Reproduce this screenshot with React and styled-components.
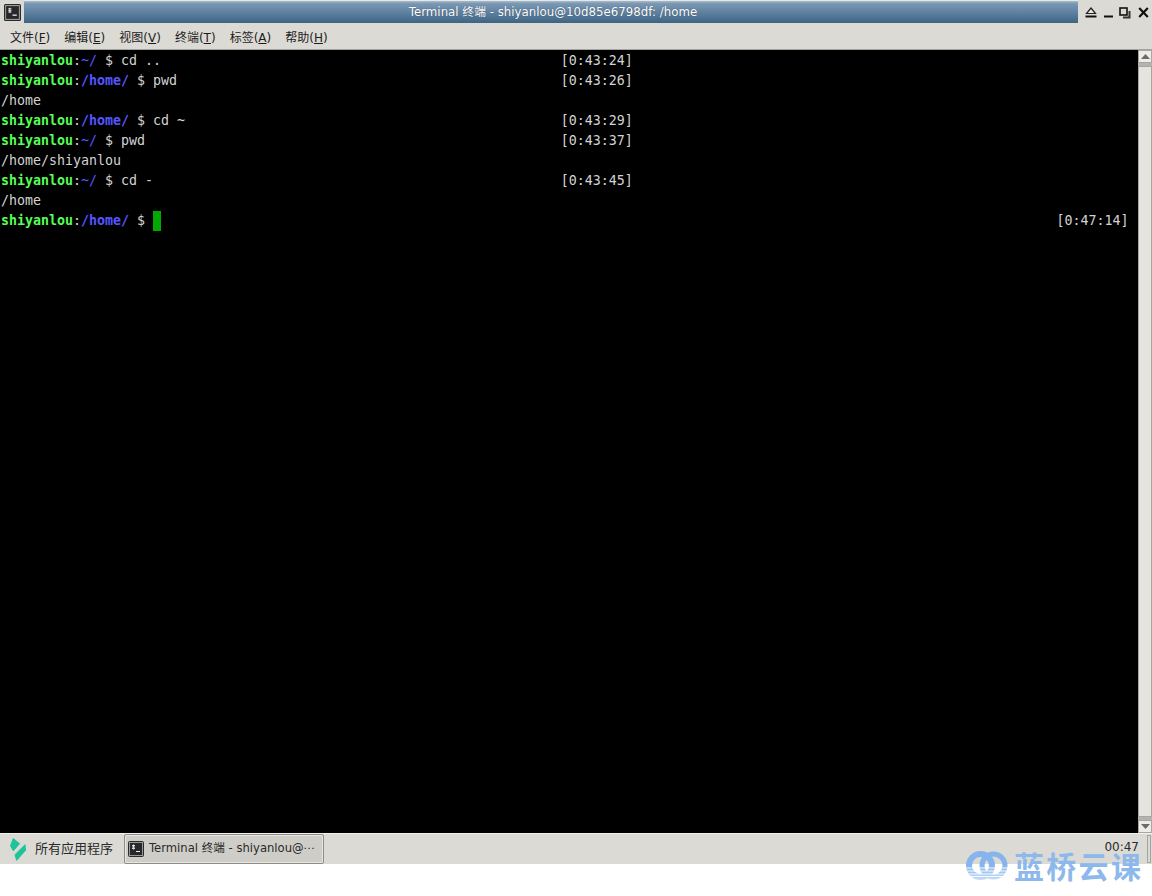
import React from "react";
import styled, { createGlobalStyle } from "styled-components";

const Global = createGlobalStyle`
  html, body { margin: 0; padding: 0; background: #fff; }
  body { font-family: "DejaVu Sans", sans-serif; }
`;

const Screen = styled.div`
  position: relative;
  width: 1152px;
  height: 896px;
  overflow: hidden;
  display: flex;
  flex-direction: column;
`;

const TitleBar = styled.div`
  height: 23px;
  flex: none;
  display: flex;
  background: #dcdad5;
`;

const WindowIconBox = styled.div`
  width: 24px;
  display: flex;
  align-items: center;
  justify-content: center;
  padding-top: 1px;
  box-sizing: border-box;
`;

const Caption = styled.div`
  flex: 1;
  text-align: center;
  color: #fff;
  font-size: 11.8px;
  line-height: 23px;
  white-space: pre;
  padding-left: 4px;
  background: linear-gradient(#a9bccd 0, #7a98b4 12%, #5c7f9f 55%, #3f6482 100%);
  border-top: 1px solid #e8e8e4;
  box-sizing: border-box;
  text-shadow: 0 0 1px rgba(0, 0, 0, 0.5);
  font-family: "DejaVu Sans", "Noto Sans CJK SC", sans-serif;
`;

const WindowButtons = styled.div`
  width: 74px;
  display: flex;
  align-items: center;
  padding: 2px 0 0 7px;
  gap: 6.5px;
  box-sizing: border-box;
`;

const MenuBar = styled.div`
  height: 27px;
  flex: none;
  display: flex;
  align-items: center;
  gap: 14px;
  padding: 0 0 0 10px;
  box-sizing: border-box;
  background: #dcdad5;
  border-bottom: 1px solid #a5a39e;
  color: #1c1c1c;
  font-size: 12px;
  font-family: "DejaVu Sans", "Noto Sans CJK SC", sans-serif;
`;

const MenuItem = styled.span`
  u { text-underline-offset: 1px; }
`;

const TermArea = styled.div`
  height: 783px;
  flex: none;
  display: flex;
  background: #000;
`;

const Term = styled.div`
  flex: 1;
  padding: 1px 0 0 1px;
  font-family: "DejaVu Sans Mono", monospace;
  font-size: 13.29px;
  line-height: 20px;
  color: #d3d3d3;
`;

const Line = styled.div`
  height: 20px;
  white-space: pre;
`;

const User = styled.span`
  color: #55ff55;
  font-weight: bold;
`;

const Colon = styled.span`
  color: #d3d3d3;
`;

const Path = styled.span`
  color: #5555ff;
  font-weight: ${(p) => (p.$bold ? "bold" : "normal")};
`;

const Cursor = styled.span`
  display: inline-block;
  width: 8px;
  height: 20px;
  background: #00aa00;
  vertical-align: top;
`;

const ScrollBar = styled.div`
  width: 14px;
  flex: none;
  display: flex;
  flex-direction: column;
  background: #b5b3ae;
  box-sizing: border-box;
`;

const ScrollArrow = styled.div`
  height: 13px;
  flex: none;
  display: flex;
  align-items: center;
  justify-content: center;
  background: #eeece8;
  border: 1px solid #a8a6a1;
  box-sizing: border-box;
`;

const ScrollThumb = styled.div`
  flex: 1;
  margin: 3px 0;
  background: #e6e4df;
  border: 1px solid #a8a6a1;
  box-sizing: border-box;
`;

const TaskBar = styled.div`
  height: 31px;
  flex: none;
  display: flex;
  align-items: center;
  background: #dcdad5;
  border-top: 1px solid #f2f1ee;
  box-sizing: border-box;
  color: #2a2a2a;
  font-family: "DejaVu Sans", "Noto Sans CJK SC", sans-serif;
`;

const StartButton = styled.div`
  width: 124px;
  display: flex;
  align-items: center;
  gap: 9px;
  padding-left: 10px;
  box-sizing: border-box;
  font-size: 13px;
`;

const TaskLabel = styled.span`
  position: relative;
  top: -2px;
`;

const TaskButton = styled.div`
  width: 200px;
  height: 30px;
  display: flex;
  align-items: center;
  gap: 5px;
  padding-left: 3px;
  box-sizing: border-box;
  border: 1px solid #8f8d87;
  border-radius: 2px;
  background: #cfcdc8;
  box-shadow: inset 0 0 0 1px #e6e5e1;
  white-space: nowrap;
  overflow: hidden;
  font-size: 11.6px;
`;

const Tray = styled.div`
  margin-left: auto;
  display: flex;
  align-items: center;
  gap: 8px;
  padding-right: 1px;
`;

const Clock = styled.span`
  font-size: 12px;
  position: relative;
  top: -2px;
`;

const Handle = styled.div`
  width: 2px;
  height: 26px;
  border: 1px solid #a5a39e;
  background: #dcdad5;
`;

const Footer = styled.div`
  flex: 1;
  background: #fff;
`;

const Watermark = styled.div`
  position: absolute;
  left: 966px;
  top: 851px;
  display: flex;
  align-items: center;
  gap: 6px;
`;

const WatermarkText = styled.span`
  font-family: "Noto Sans CJK SC", sans-serif;
  font-weight: 700;
  font-size: 30px;
  line-height: 29px;
  letter-spacing: 2.3px;
  color: #8db8ec;
`;

const TermIcon = ({ size = 16 }) => (
  <svg width={size} height={size} viewBox="0 0 16 16">
    <rect x="0.5" y="0.5" width="15" height="15" rx="1" fill="#9a9a97" stroke="#2a2a2a" />
    <rect x="2" y="2" width="12" height="12" fill="#26282b" />
    <path d="M4 4.5h3M4 6h3M4 7.5h3M5.5 3.5v5" stroke="#e8e8e8" strokeWidth="0.9" />
    <path d="M8 10.5h4" stroke="#f0f0f0" strokeWidth="1.2" />
  </svg>
);

const EjectIcon = () => (
  <svg width="12" height="11" viewBox="0 0 12 11">
    <path d="M6 1 L10.5 6.5 H1.5 Z" fill="#e8e6e1" stroke="#222" strokeWidth="1.2" />
    <path d="M0.5 9.5h11" stroke="#111" strokeWidth="2" />
  </svg>
);

const MinIcon = () => (
  <svg width="9" height="11" viewBox="0 0 9 11">
    <path d="M0 9.5h9" stroke="#111" strokeWidth="2" />
  </svg>
);

const MaxIcon = () => (
  <svg width="12" height="12" viewBox="0 0 12 12">
    <path d="M4 10.5 H10.5 V4" fill="none" stroke="#333" strokeWidth="2" />
    <rect x="1" y="1" width="7" height="7" fill="none" stroke="#111" strokeWidth="1.6" />
  </svg>
);

const CloseIcon = () => (
  <svg width="11" height="11" viewBox="0 0 11 11">
    <path d="M1.2 1 L9.8 10 M9.8 1 L1.2 10" stroke="#111" strokeWidth="2.2" />
  </svg>
);

const Arrow = ({ down }) => (
  <svg width="9" height="5" viewBox="0 0 9 5">
    <path d={down ? "M0 0h9L4.5 5z" : "M0 5h9L4.5 0z"} fill="#6d6b67" />
  </svg>
);

const LeafLogo = () => (
  <svg width="16" height="23" viewBox="0 0 16 23">
    <path d="M3.3 0.5 L9.5 5.7 L3.3 12.8 L0.5 7.7 Z" fill="#1fc39a" stroke="#1fc39a" strokeLinejoin="round" />
    <path d="M15 6.7 L15.5 12.3 L6.7 22.3 L5 16.7 Z" fill="#1fc39a" stroke="#1fc39a" strokeLinejoin="round" />
  </svg>
);

const RingsLogo = () => (
  <svg width="42" height="29" viewBox="0 0 42 29">
    <defs>
      <linearGradient id="rings" gradientUnits="userSpaceOnUse" x1="0" y1="0" x2="0" y2="29">
        <stop offset="0.5" stopColor="#86b4ec" />
        <stop offset="1" stopColor="#c6ddf7" />
      </linearGradient>
    </defs>
    <circle cx="14.5" cy="14.5" r="11.5" fill="none" stroke="url(#rings)" strokeWidth="6" />
    <circle cx="27.5" cy="14.5" r="11.5" fill="none" stroke="url(#rings)" strokeWidth="5" />
    <path d="M0 17h42M0 20h42M0 23h42M0 25.5h42" stroke="#fff" strokeWidth="0.9" />
  </svg>
);

const menus = [
  ["文件", "F"],
  ["编辑", "E"],
  ["视图", "V"],
  ["终端", "T"],
  ["标签", "A"],
  ["帮助", "H"],
];

const CLOCK_COLUMN = 70;
const LAST_COLUMN = 132;

// prompt + command, the clock sits at a fixed character column like in zsh
const Prompt = ({ path, cmd, time, cursor }) => {
  const left = `shiyanlou:${path} $ ${cursor ? "" : cmd}`;
  const col = cursor ? LAST_COLUMN - 1 : CLOCK_COLUMN;
  return (
    <Line>
      <User>shiyanlou</User>
      <Colon>:</Colon>
      <Path $bold={path !== "~/"}>{path}</Path>
      {" $ "}
      {cursor ? <Cursor /> : cmd}
      {" ".repeat(col - left.length)}[{time}]
    </Line>
  );
};

const App = () => (
  <Screen>
    <Global />
    <TitleBar>
      <WindowIconBox>
        <TermIcon size={17} />
      </WindowIconBox>
      <Caption>Terminal 终端 - shiyanlou@10d85e6798df: /home</Caption>
      <WindowButtons>
        <EjectIcon />
        <MinIcon />
        <MaxIcon />
        <CloseIcon />
      </WindowButtons>
    </TitleBar>
    <MenuBar>
      {menus.map(([label, key]) => (
        <MenuItem key={key}>
          {label}(<u>{key}</u>)
        </MenuItem>
      ))}
    </MenuBar>
    <TermArea>
      <Term>
        <Prompt path="~/" cmd="cd .." time="0:43:24" />
        <Prompt path="/home/" cmd="pwd" time="0:43:26" />
        <Line>/home</Line>
        <Prompt path="/home/" cmd="cd ~" time="0:43:29" />
        <Prompt path="~/" cmd="pwd" time="0:43:37" />
        <Line>/home/shiyanlou</Line>
        <Prompt path="~/" cmd="cd -" time="0:43:45" />
        <Line>/home</Line>
        <Prompt path="/home/" time="0:47:14" cursor />
      </Term>
      <ScrollBar>
        <ScrollArrow>
          <Arrow />
        </ScrollArrow>
        <ScrollThumb />
        <ScrollArrow>
          <Arrow down />
        </ScrollArrow>
      </ScrollBar>
    </TermArea>
    <TaskBar>
      <StartButton>
        <LeafLogo />
        <TaskLabel>所有应用程序</TaskLabel>
      </StartButton>
      <TaskButton>
        <TermIcon />
        <TaskLabel>Terminal 终端 - shiyanlou@⋯</TaskLabel>
      </TaskButton>
      <Tray>
        <Clock>00:47</Clock>
        <Handle />
      </Tray>
    </TaskBar>
    <Footer />
    <Watermark>
      <RingsLogo />
      <WatermarkText>蓝桥云课</WatermarkText>
    </Watermark>
  </Screen>
);

export default App;
